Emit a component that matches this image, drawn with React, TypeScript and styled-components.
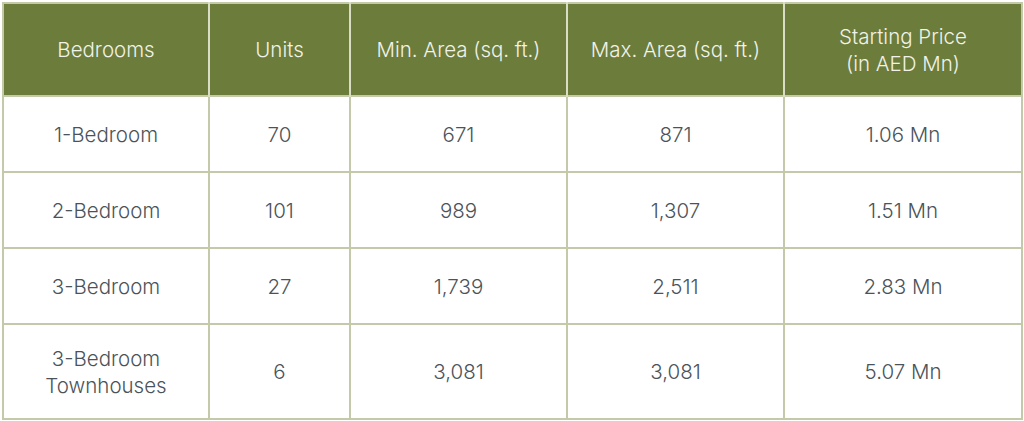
import React from "react";
import styled, { createGlobalStyle } from "styled-components";

const GlobalStyle = createGlobalStyle`
  body {
    margin: 0;
    background: #ffffff;
    font-family: Inter, "Liberation Sans", sans-serif;
  }
`;

const Wrapper = styled.div`
  padding: 2px 3px 0 2px;
`;

const Table = styled.table`
  width: 1019px;
  border-collapse: collapse;
  table-layout: fixed;
  border: 2px solid #c4caa9;
`;

const Col = styled.col<{ $w: number }>`
  width: ${(p) => p.$w}px;
`;

const HeadCell = styled.th`
  height: 91px;
  padding: 0;
  background: #6b7c3b;
  color: #f1f2e9;
  font-weight: 300;
  font-size: 20.5px;
  line-height: 27px;
  text-align: center;
  vertical-align: middle;
  border-left: 2px solid #d9ddc6;
  &:first-child {
    border-left: none;
  }
`;

const Row = styled.tr<{ $tall?: boolean }>`
  height: ${(p) => (p.$tall ? 95 : 76)}px;
`;

const Cell = styled.td`
  padding: 0;
  color: #4b535a;
  font-weight: 300;
  font-size: 20.5px;
  line-height: 27px;
  text-align: center;
  vertical-align: middle;
  border: 2px solid #c4caa9;
`;

const columns = [
  { label: "Bedrooms", w: 206 },
  { label: "Units", w: 141 },
  { label: "Min. Area (sq. ft.)", w: 217 },
  { label: "Max. Area (sq. ft.)", w: 217 },
  { label: "Starting Price\n(in AED Mn)", w: 238 },
];

const rows = [
  ["1-Bedroom", "70", "671", "871", "1.06 Mn"],
  ["2-Bedroom", "101", "989", "1,307", "1.51 Mn"],
  ["3-Bedroom", "27", "1,739", "2,511", "2.83 Mn"],
  ["3-Bedroom\nTownhouses", "6", "3,081", "3,081", "5.07 Mn"],
];

const Lines = ({ text }: { text: string }) => (
  <>
    {text.split("\n").map((line, i) => (
      <React.Fragment key={i}>
        {i > 0 && <br />}
        {line}
      </React.Fragment>
    ))}
  </>
);

const App: React.FC = () => {
  return (
    <Wrapper>
      <GlobalStyle />
      <Table>
        <colgroup>
          {columns.map((c) => (
            <Col key={c.label} $w={c.w} />
          ))}
        </colgroup>
        <thead>
          <tr>
            {columns.map((c) => (
              <HeadCell key={c.label}>
                <Lines text={c.label} />
              </HeadCell>
            ))}
          </tr>
        </thead>
        <tbody>
          {rows.map((r, i) => (
            <Row key={i} $tall={i === rows.length - 1}>
              {r.map((v, j) => (
                <Cell key={j}>
                  <Lines text={v} />
                </Cell>
              ))}
            </Row>
          ))}
        </tbody>
      </Table>
    </Wrapper>
  );
};

export default App;
